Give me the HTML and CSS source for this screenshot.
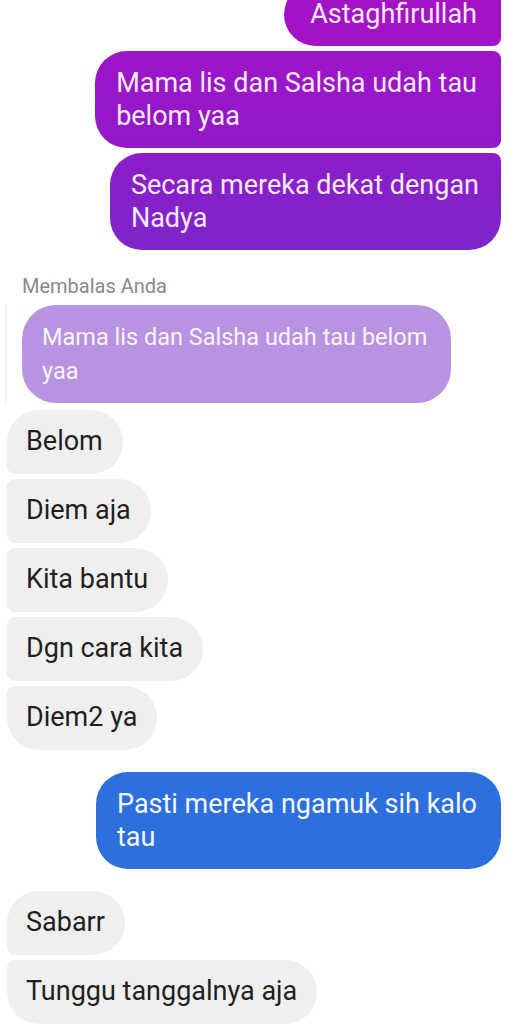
FILE: index.html
```html
<!DOCTYPE html>
<html lang="id">

<head>
    <meta charset="UTF-8">
    <meta name="viewport" content="width=device-width, initial-scale=1.0">
    <title>Chat</title>
    <link rel="stylesheet" href="styles.css">
</head>

<body>
    <div class="chat">
        <div class="bubble me purple-1 first-cut">Astaghfirullah</div>
        <div class="bubble me purple-2 mid">Mama lis dan Salsha udah tau<br>belom yaa</div>
        <div class="bubble me purple-3 last">Secara mereka dekat dengan<br>Nadya</div>

        <div class="reply-label">Membalas Anda</div>
        <div class="reply">
            <div class="quote">Mama lis dan Salsha udah tau belom<br>yaa</div>
        </div>

        <div class="bubble them g-first">Belom</div>
        <div class="bubble them g-mid">Diem aja</div>
        <div class="bubble them g-mid">Kita bantu</div>
        <div class="bubble them g-mid">Dgn cara kita</div>
        <div class="bubble them g-last">Diem2 ya</div>

        <div class="bubble me blue">Pasti mereka ngamuk sih kalo<br>tau</div>

        <div class="bubble them g-first sep">Sabarr</div>
        <div class="bubble them g-last">Tunggu tanggalnya aja</div>
    </div>
</body>

</html>
```

FILE: styles.css
```css
body {
    margin: 0;
    padding: 0;
    background: #fff;
    font-family: Roboto, "Noto Sans", Arial, sans-serif;
    overflow: hidden;
}

.chat {
    display: flex;
    flex-direction: column;
    gap: 5px;
}

.bubble {
    width: fit-content;
    font-size: 27px;
    line-height: 33px;
    padding: 15px 24px 15px 21px;
    white-space: nowrap;
}

.me {
    align-self: flex-end;
    margin-right: 11px;
    color: #fbe9fb;
}

.them {
    align-self: flex-start;
    margin-left: 7px;
    padding: 15px 20px 16px 19px;
    background: #efefef;
    color: #1f1f1f;
}

.purple-1 {
    background: #a313c6;
    border-radius: 32px 8px 8px 32px;
    padding-left: 26px;
}

.first-cut {
    margin-top: -17px;
}

.purple-2 {
    background: linear-gradient(to bottom, #9d15c8, #9119c8);
    border-radius: 32px 8px 8px 32px;
    padding-top: 16px;
}

.purple-3 {
    background: linear-gradient(to bottom, #8c1dc9, #7d26c9);
    border-radius: 32px 8px 32px 32px;
    padding: 16px 22px 15px 21px;
}

.reply-label {
    margin: 21px 0 0 22px;
    font-size: 20px;
    line-height: 20px;
    color: #8a8a8a;
}

.reply {
    margin: 4px 0 2px 5px;
    padding-left: 15px;
    border-left: 2px solid #f1f1f1;
}

.quote {
    width: fit-content;
    background: #b793e1;
    color: #fdf4ff;
    font-size: 23.5px;
    line-height: 34px;
    padding: 15px 24px 15px 20px;
    border-radius: 34px;
    white-space: nowrap;
}

.g-first {
    border-radius: 32px 32px 32px 8px;
}

.g-mid {
    border-radius: 8px 32px 32px 8px;
}

.g-last {
    border-radius: 8px 32px 32px 32px;
}

.blue {
    margin-top: 17px;
    background: #2e6fde;
    color: #f4f8ff;
    border-radius: 32px;
    padding-top: 16px;
}

.sep {
    margin-top: 17px;
}
```
